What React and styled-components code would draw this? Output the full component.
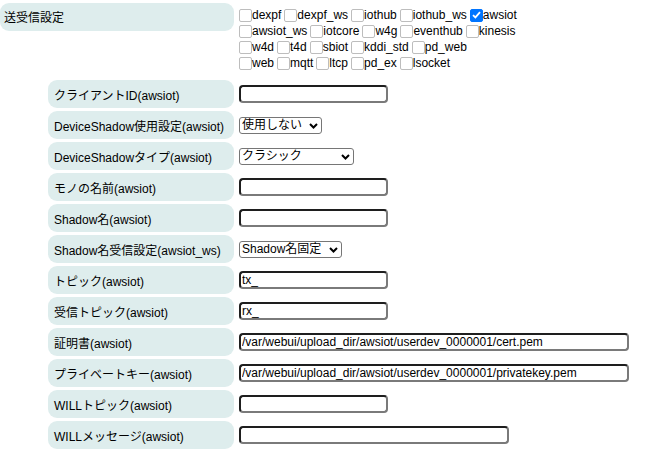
import React from "react";
import styled, { createGlobalStyle } from "styled-components";

const Global = createGlobalStyle`
  html, body { margin: 0; padding: 0; background: #fff; }
  body {
    font-family: "Liberation Sans", Arial, "Noto Sans CJK JP", sans-serif;
    font-size: 12px;
    color: #000;
  }
`;

const Page = styled.div`
  width: 664px;
  height: 451px;
  overflow: hidden;
`;

const TopSection = styled.div`
  display: flex;
  gap: 5px;
`;

const TopLabel = styled.div`
  width: 234px;
  height: 28px;
  margin-top: 3px;
  box-sizing: border-box;
  padding: 0 4px 2px;
  display: flex;
  align-items: center;
  background: #deeded;
  border-radius: 9px;
`;

const CheckGroup = styled.div`
  display: flex;
  flex-direction: column;
  padding-top: 7px;
`;

const CheckLine = styled.div`
  display: flex;
  height: 16px;
  align-items: center;
  gap: 3px;
  white-space: nowrap;
`;

const CheckItem = styled.label`
  display: inline-flex;
  align-items: center;
  line-height: 16px;
`;

const Box = styled.span`
  width: 13px;
  height: 13px;
  box-sizing: border-box;
  border-radius: 2px;
  border: 1px solid ${(p) => (p.$checked ? "#0075ff" : "#bdbdbd")};
  background: ${(p) => (p.$checked ? "#0075ff" : "#fff")};
  display: inline-flex;
  align-items: center;
  justify-content: center;
  flex-shrink: 0;
`;

const Rows = styled.div`
  display: grid;
  grid-template-columns: 186px 1fr;
  column-gap: 5px;
  row-gap: 3px;
  padding-left: 48px;
  margin-top: 9px;
`;

const Label = styled.div`
  height: 28px;
  box-sizing: border-box;
  padding: 0 6px;
  display: flex;
  align-items: center;
  background: #deeded;
  border-radius: 9px;
  white-space: nowrap;
`;

const Field = styled.div`
  display: flex;
  align-items: center;
`;

const TextInput = styled.input`
  width: ${(p) => p.$w}px;
  height: 18px;
  box-sizing: border-box;
  margin: 0;
  padding: 0 1px;
  border-style: solid;
  border-width: 2px;
  border-color: #1e1e1e #7a7a7a #7a7a7a #1e1e1e;
  border-radius: 4px;
  background: #fff;
  font-family: "Liberation Sans", Arial, sans-serif;
  font-size: 12px;
  color: #000;
  outline: none;
`;

const SelectWrap = styled.div`
  position: relative;
  width: ${(p) => p.$w}px;
  height: 17px;
`;

const Select = styled.select`
  appearance: none;
  -webkit-appearance: none;
  width: 100%;
  height: 100%;
  box-sizing: border-box;
  margin: 0;
  padding: 0 0 0 2px;
  border: 1px solid #767676;
  border-radius: 3px;
  background: #fff;
  font-family: "Liberation Sans", Arial, "Noto Sans CJK JP", sans-serif;
  font-size: 12px;
  line-height: 15px;
  color: #000;
`;

const Chevron = styled.svg`
  position: absolute;
  right: 4px;
  top: 6px;
  pointer-events: none;
`;

const Check = () => (
  <svg width="9" height="8" viewBox="0 0 9 8">
    <path d="M1 4.2 L3.4 6.4 L8 1.2" fill="none" stroke="#fff" strokeWidth="1.8" />
  </svg>
);

const protocols = [
  ["dexpf", "dexpf_ws", "iothub", "iothub_ws", "awsiot"],
  ["awsiot_ws", "iotcore", "w4g", "eventhub", "kinesis"],
  ["w4d", "t4d", "sbiot", "kddi_std", "pd_web"],
  ["web", "mqtt", "ltcp", "pd_ex", "lsocket"],
];

const Dropdown = ({ w, value }) => (
  <SelectWrap $w={w}>
    <Select defaultValue={value}>
      <option>{value}</option>
    </Select>
    <Chevron width="9" height="6" viewBox="0 0 9 6">
      <path d="M1 1 L4.5 4.5 L8 1" fill="none" stroke="#000" strokeWidth="2" />
    </Chevron>
  </SelectWrap>
);

const rows = [
  { label: "クライアントID(awsiot)", input: 149, value: "" },
  { label: "DeviceShadow使用設定(awsiot)", select: 83, value: "使用しない" },
  { label: "DeviceShadowタイプ(awsiot)", select: 115, value: "クラシック" },
  { label: "モノの名前(awsiot)", input: 149, value: "" },
  { label: "Shadow名(awsiot)", input: 149, value: "" },
  { label: "Shadow名受信設定(awsiot_ws)", select: 103, value: "Shadow名固定" },
  { label: "トピック(awsiot)", input: 149, value: "tx_" },
  { label: "受信トピック(awsiot)", input: 149, value: "rx_" },
  { label: "証明書(awsiot)", input: 390, value: "/var/webui/upload_dir/awsiot/userdev_0000001/cert.pem" },
  { label: "プライベートキー(awsiot)", input: 390, value: "/var/webui/upload_dir/awsiot/userdev_0000001/privatekey.pem" },
  { label: "WILLトピック(awsiot)", input: 149, value: "" },
  { label: "WILLメッセージ(awsiot)", input: 270, value: "" },
];

export default function App() {
  return (
    <Page>
      <Global />
      <TopSection>
        <TopLabel>送受信設定</TopLabel>
        <CheckGroup>
          {protocols.map((line, i) => (
            <CheckLine key={i}>
              {line.map((name) => (
                <CheckItem key={name}>
                  <Box $checked={name === "awsiot"}>{name === "awsiot" && <Check />}</Box>
                  {name}
                </CheckItem>
              ))}
            </CheckLine>
          ))}
        </CheckGroup>
      </TopSection>
      <Rows>
        {rows.map((r) => (
          <React.Fragment key={r.label}>
            <Label>{r.label}</Label>
            <Field>
              {r.select ? (
                <Dropdown w={r.select} value={r.value} />
              ) : (
                <TextInput $w={r.input} defaultValue={r.value} />
              )}
            </Field>
          </React.Fragment>
        ))}
      </Rows>
    </Page>
  );
}
